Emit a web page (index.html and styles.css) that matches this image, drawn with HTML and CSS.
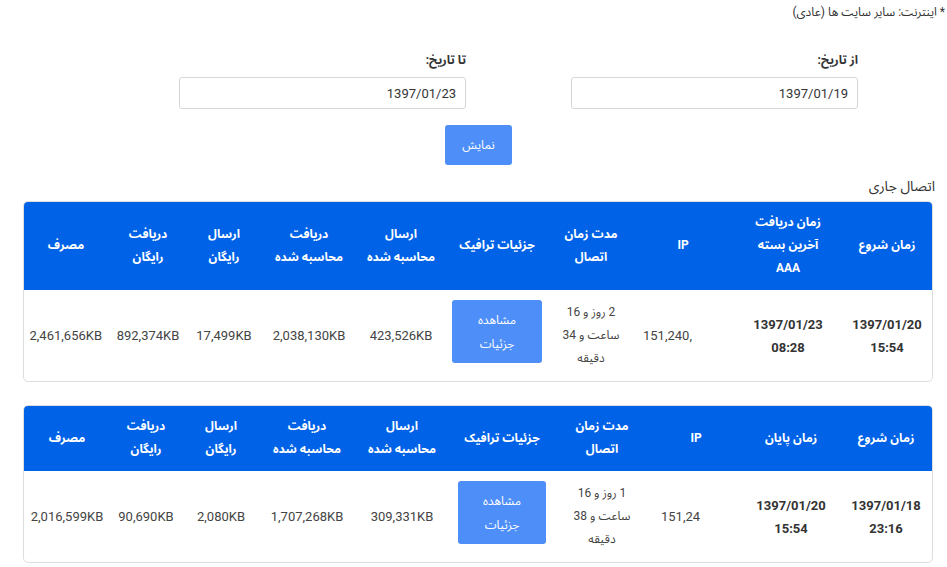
FILE: index.html
```html
<!DOCTYPE html>
<html lang="fa" dir="rtl">
<head>
  <meta charset="UTF-8" />
  <meta name="viewport" content="width=device-width, initial-scale=1.0"/>
  <title>گزارش اتصال</title>
  <link rel="stylesheet" href="styles.css">
</head>
<body>
  <div class="note">* اینترنت: سایر سایت ها (عادی)</div>

  <div class="filters">
    <div class="field">
      <label for="fromDate">از تاریخ:</label>
      <input type="text" id="fromDate" value="1397/01/19">
    </div>
    <div class="field">
      <label for="toDate">تا تاریخ:</label>
      <input type="text" id="toDate" value="1397/01/23">
    </div>
  </div>
  <div class="actions">
    <button class="btn">نمایش</button>
  </div>

  <div class="section-title">اتصال جاری</div>
  <div class="card">
    <table class="current">
      <colgroup>
        <col style="width:90px"><col style="width:108px"><col style="width:102px"><col style="width:82px"><col style="width:106px">
        <col style="width:86px"><col style="width:98px"><col style="width:72px"><col style="width:80px"><col>
      </colgroup>
      <thead>
        <tr>
          <th>زمان شروع</th>
          <th>زمان دریافت<br>آخرین بسته<br>AAA</th>
          <th>IP</th>
          <th>مدت زمان<br>اتصال</th>
          <th>جزئیات ترافیک</th>
          <th>ارسال<br>محاسبه شده</th>
          <th>دریافت<br>محاسبه شده</th>
          <th>ارسال<br>رایگان</th>
          <th>دریافت<br>رایگان</th>
          <th>مصرف</th>
        </tr>
      </thead>
      <tbody>
        <tr>
          <td class="date">1397/01/20<br>15:54</td>
          <td class="date">1397/01/23<br>08:28</td>
          <td class="ip"><span>151,240,</span></td>
          <td class="duration">2 روز و 16<br>ساعت و 34<br>دقیقه</td>
          <td class="detail"><button class="btn btn-detail">مشاهده<br>جزئیات</button></td>
          <td>423,526KB</td>
          <td>2,038,130KB</td>
          <td>17,499KB</td>
          <td>892,374KB</td>
          <td>2,461,656KB</td>
        </tr>
      </tbody>
    </table>
  </div>

  <div class="card">
    <table class="history">
      <colgroup>
        <col style="width:92px"><col style="width:98px"><col style="width:92px"><col style="width:96px"><col style="width:104px">
        <col style="width:96px"><col style="width:94px"><col style="width:78px"><col style="width:72px"><col>
      </colgroup>
      <thead>
        <tr>
          <th>زمان شروع</th>
          <th>زمان پایان</th>
          <th>IP</th>
          <th>مدت زمان<br>اتصال</th>
          <th>جزئیات ترافیک</th>
          <th>ارسال<br>محاسبه شده</th>
          <th>دریافت<br>محاسبه شده</th>
          <th>ارسال<br>رایگان</th>
          <th>دریافت<br>رایگان</th>
          <th>مصرف</th>
        </tr>
      </thead>
      <tbody>
        <tr>
          <td class="date">1397/01/18<br>23:16</td>
          <td class="date">1397/01/20<br>15:54</td>
          <td class="ip"><span>151,24</span></td>
          <td class="duration">1 روز و 16<br>ساعت و 38<br>دقیقه</td>
          <td class="detail"><button class="btn btn-detail">مشاهده<br>جزئیات</button></td>
          <td>309,331KB</td>
          <td>1,707,268KB</td>
          <td>2,080KB</td>
          <td>90,690KB</td>
          <td>2,016,599KB</td>
        </tr>
      </tbody>
    </table>
  </div>
</body>
</html>
```

FILE: styles.css
```css
body {
  font-family: Roboto, "Noto Sans Arabic", "DejaVu Sans", sans-serif;
  font-size: 13px;
  color: #333;
  background-color: white;
  margin: 0;
  padding: 0;
  direction: rtl;
}
.note {
  padding: 4px 2px 0 0;
  font-size: 12px;
  line-height: 16px;
}
.filters {
  display: flex;
  gap: 105px;
  margin: 32px 89px 0 0;
}
.field {
  width: 287px;
}
.field label {
  display: block;
  font-weight: bold;
  font-size: 12px;
  line-height: 16px;
  margin-bottom: 9px;
}
.field input {
  box-sizing: border-box;
  width: 100%;
  height: 32px;
  padding: 0 9px;
  border: 1px solid #d6d6d6;
  border-radius: 3px;
  font-family: inherit;
  font-size: 13px;
  color: #333;
  direction: ltr;
  text-align: right;
}
.actions {
  display: flex;
  justify-content: center;
  padding-left: 10px;
  margin-top: 16px;
}
.btn {
  background-color: #4d8ef8;
  color: white;
  border: none;
  border-radius: 3px;
  font-family: inherit;
  font-size: 12px;
  cursor: pointer;
}
.actions .btn {
  width: 67px;
  height: 40px;
}
.section-title {
  font-size: 14px;
  line-height: 20px;
  margin: 11px 12px 5px 0;
}
.card {
  margin: 0 14px 23px 23px;
  border: 1px solid #dedede;
  border-radius: 5px;
  overflow: hidden;
}
table {
  width: 100%;
  border-collapse: collapse;
  table-layout: fixed;
  text-align: center;
}
th {
  background-color: #0062e6;
  color: white;
  font-weight: bold;
  font-size: 12px;
  line-height: 23px;
  padding: 9px 4px 10px;
  white-space: nowrap;
}
td {
  line-height: 23px;
  padding: 11px 6px;
  color: #444;
}
td.date {
  font-weight: bold;
  color: #333;
}
td.ip {
  text-align: left;
  padding-left: 11px;
}
td.ip span {
  white-space: nowrap;
  direction: ltr;
  unicode-bidi: isolate;
}
td.duration {
  font-size: 12px;
  white-space: nowrap;
}
td.detail {
  vertical-align: top;
  padding: 10px 8px 18px;
}
.btn-detail {
  display: block;
  width: 100%;
  height: 63px;
  line-height: 24px;
  padding: 6px 10px;
}
```
